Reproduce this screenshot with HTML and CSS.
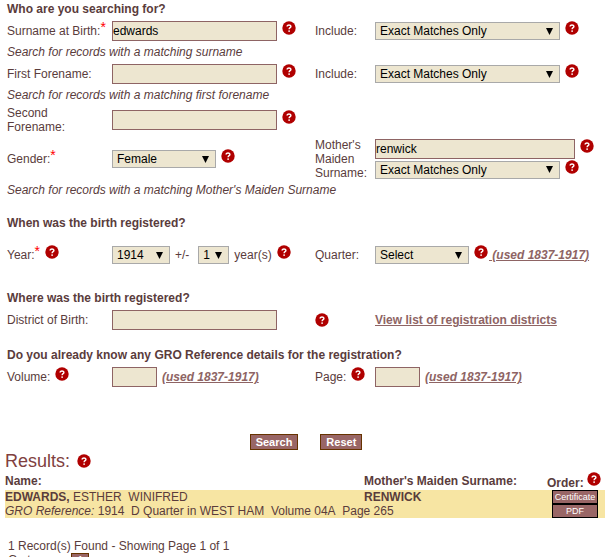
FILE: index.html
```html
<!DOCTYPE html>
<html lang="en">
<head>
  <meta charset="UTF-8">
  <meta name="viewport" content="width=device-width, initial-scale=1.0">
  <title>GRO Index Search</title>
  <link rel="stylesheet" href="styles.css">
</head>
<body>
  <svg class="defs" aria-hidden="true">
    <symbol id="help" viewBox="0 0 14 14">
      <circle cx="7" cy="7" r="6.7" fill="#b00000"/>
      <path d="M5.1 5.4C5.1 3.5 8.9 3.5 8.9 5.4C8.9 6.7 7.1 6.6 7.1 8.2" fill="none" stroke="#fff" stroke-width="1.4"/>
      <circle cx="7.1" cy="10.1" r=".9" fill="#fff"/>
    </symbol>
  </svg>

  <form class="search-form" onsubmit="return false">
    <h3>Who are you searching for?</h3>
    <div class="row">
      <label for="surname">Surname at Birth:<span class="req">*</span></label>
      <div class="field">
        <input type="text" id="surname" value="edwards">
        <svg class="help"><use href="#help"/></svg>
      </div>
      <label for="surnameMatch">Include:</label>
      <div class="field">
        <select id="surnameMatch"><option>Exact Matches Only</option></select>
        <svg class="help"><use href="#help"/></svg>
      </div>
    </div>
    <p class="hint">Search for records with a matching surname</p>

    <div class="row">
      <label for="forename1">First Forename:</label>
      <div class="field">
        <input type="text" id="forename1">
        <svg class="help"><use href="#help"/></svg>
      </div>
      <label for="forenameMatch">Include:</label>
      <div class="field">
        <select id="forenameMatch"><option>Exact Matches Only</option></select>
        <svg class="help"><use href="#help"/></svg>
      </div>
    </div>
    <p class="hint">Search for records with a matching first forename</p>

    <div class="row second">
      <label for="forename2">Second<br>Forename:</label>
      <div class="field">
        <input type="text" id="forename2">
        <svg class="help"><use href="#help"/></svg>
      </div>
    </div>

    <div class="row mother">
      <label for="gender">Gender:<span class="req">*</span></label>
      <div class="field">
        <select id="gender" class="medium"><option>Female</option></select>
        <svg class="help"><use href="#help"/></svg>
      </div>
      <label for="maiden">Mother's Maiden Surname:</label>
      <div class="stack">
        <div class="field">
          <input type="text" id="maiden" class="wide" value="renwick">
          <svg class="help"><use href="#help"/></svg>
        </div>
        <div class="field">
          <select aria-label="Include"><option>Exact Matches Only</option></select>
          <svg class="help"><use href="#help"/></svg>
        </div>
      </div>
    </div>
    <p class="hint">Search for records with a matching Mother's Maiden Surname</p>

    <h3 class="when">When was the birth registered?</h3>
    <div class="row">
      <div class="field">
        <label for="year">Year:<span class="req">*</span></label>
        <svg class="help"><use href="#help"/></svg>
      </div>
      <div class="field">
        <select id="year" class="small"><option>1914</option></select>
        <label for="range" class="range">+/-</label>
        <select id="range" class="tiny"><option>1</option></select>
        <span>year(s)</span>
        <svg class="help"><use href="#help"/></svg>
      </div>
      <label for="quarter">Quarter:</label>
      <div class="field">
        <select id="quarter" class="quarter"><option>Select</option></select>
        <span class="field-note">
          <svg class="help"><use href="#help"/></svg>
          <a href="#" class="used">&nbsp;(used 1837-1917)</a>
        </span>
      </div>
    </div>

    <h3 class="where">Where was the birth registered?</h3>
    <div class="row">
      <label for="district">District of Birth:</label>
      <div class="field"><input type="text" id="district"></div>
      <svg class="help"><use href="#help"/></svg>
      <a href="#">View list of registration districts</a>
    </div>

    <h3 class="known">Do you already know any GRO Reference details for the registration?</h3>
    <div class="row">
      <div class="field">
        <label for="volume">Volume:</label>
        <svg class="help"><use href="#help"/></svg>
      </div>
      <div class="field">
        <input type="text" id="volume" class="short">
        <a href="#" class="used">(used 1837-1917)</a>
      </div>
      <div class="field">
        <label for="page">Page:</label>
        <svg class="help"><use href="#help"/></svg>
      </div>
      <div class="field">
        <input type="text" id="page" class="short">
        <a href="#" class="used">(used 1837-1917)</a>
      </div>
    </div>

    <div class="buttons">
      <button type="submit">Search</button>
      <button type="reset">Reset</button>
    </div>
  </form>

  <section class="results">
    <h2>Results: <svg class="help"><use href="#help"/></svg></h2>
    <table>
      <thead>
        <tr>
          <th>Name:</th>
          <th class="col-maiden">Mother's Maiden Surname:</th>
          <th class="col-order"><span class="order">Order: <svg class="help"><use href="#help"/></svg></span></th>
        </tr>
      </thead>
      <tbody>
        <tr>
          <td><b>EDWARDS,</b> ESTHER&nbsp; WINIFRED</td>
          <td><b>RENWICK</b></td>
          <td rowspan="2" class="order-cell">
            <button type="button">Certificate</button>
            <button type="button">PDF</button>
          </td>
        </tr>
        <tr>
          <td colspan="2"><i>GRO Reference:</i> 1914&nbsp; D Quarter in WEST HAM&nbsp; Volume 04A&nbsp; Page 265</td>
        </tr>
      </tbody>
    </table>
    <div class="pager">
      <p>1 Record(s) Found - Showing Page 1 of 1</p>
      <p class="goto">Go to page <button type="button">1</button></p>
    </div>
  </section>
</body>
</html>
```
FILE: styles.css
```css
* {
  box-sizing: border-box;
}

body {
  margin: 0;
  background: #fff;
  color: #5a3c3c;
  font-family: Arial, "Liberation Sans", sans-serif;
  font-size: 12px;
  line-height: 14px;
  overflow: hidden;
}

h2, h3, p {
  margin: 0;
}

.defs {
  display: none;
}

.search-form {
  padding: 0 7px;
}

h3 {
  font-size: 12px;
  line-height: 18px;
}

.when {
  margin: 15px 0 10px;
}

.where {
  margin-top: 21px;
}

.known {
  margin-top: 13px;
}

.row {
  display: grid;
  grid-template-columns: 105px 203px 60px 1fr;
  align-items: center;
  min-height: 26px;
}

.second {
  min-height: 32px;
}

.mother {
  min-height: 46px;
}

.hint {
  font-style: italic;
  line-height: 17px;
}

.field {
  display: flex;
  align-items: center;
  gap: 5px;
  min-height: 20px;
  white-space: nowrap;
}

.field .help {
  align-self: flex-start;
}

.field-note {
  display: flex;
  align-items: center;
  gap: 1px;
  min-height: 20px;
}

.range {
  margin-right: 4px;
}

.stack {
  display: grid;
  gap: 1px;
}

.req {
  color: #f00;
  font-size: 14px;
  line-height: 0;
  vertical-align: 3px;
}

.help {
  width: 14px;
  height: 14px;
  flex: none;
}

input, select {
  font: inherit;
  color: #000;
  background-color: #ede6d0;
  border-radius: 0;
}

input {
  width: 165px;
  height: 20px;
  padding: 0;
  border: 1px solid #8e6464;
}

input.wide {
  width: 200px;
}

input.short {
  width: 45px;
}

select {
  appearance: none;
  width: 185px;
  height: 18px;
  padding: 0 4px;
  border: 1px solid #a9a9a9;
  background-image: url("data:image/svg+xml,%3Csvg xmlns='http://www.w3.org/2000/svg' width='7' height='7'%3E%3Cpath d='M0 0h7L3.5 7z'/%3E%3C/svg%3E");
  background-repeat: no-repeat;
  background-position: right 6px center;
}

select.medium {
  width: 104px;
}

select.small {
  width: 58px;
}

select.tiny {
  width: 31px;
}

select.quarter {
  width: 94px;
}

a {
  color: #8e6464;
  font-weight: bold;
}

.used {
  font-style: italic;
}

.buttons {
  display: flex;
  justify-content: center;
  gap: 22px;
  margin-top: 44px;
}

button {
  font: inherit;
  color: #fff;
  background: #996666;
  border: 1px solid #663300;
}

.buttons button {
  height: 16px;
  padding: 0 5px;
  font-size: 11px;
  font-weight: bold;
  line-height: 14px;
}

.results {
  padding: 0 7px 0 5px;
}

h2 {
  display: flex;
  align-items: center;
  gap: 7px;
  color: #804040;
  font-size: 18px;
  font-weight: normal;
  line-height: 22px;
}

table {
  width: 100%;
  border-collapse: collapse;
  table-layout: fixed;
}

th, td {
  padding: 0;
  text-align: left;
}

th {
  height: 18px;
}

.col-maiden {
  width: 183px;
}

.col-order {
  width: 58px;
}

.order {
  display: flex;
  align-items: flex-end;
  gap: 3px;
  height: 18px;
}

.order .help {
  align-self: flex-start;
}

tbody {
  background: #f7e5a3;
}

td {
  height: 14px;
}

.order-cell {
  padding-left: 5px;
}

.order-cell button {
  display: block;
  width: 46px;
  height: 14px;
  padding: 0;
  border-color: #000;
  font-size: 9px;
  line-height: 12px;
}

.pager {
  padding: 21px 0 0 3px;
}

.goto {
  display: flex;
  gap: 4px;
}

.goto button {
  width: 18px;
  height: 16px;
  padding: 0;
}
```
